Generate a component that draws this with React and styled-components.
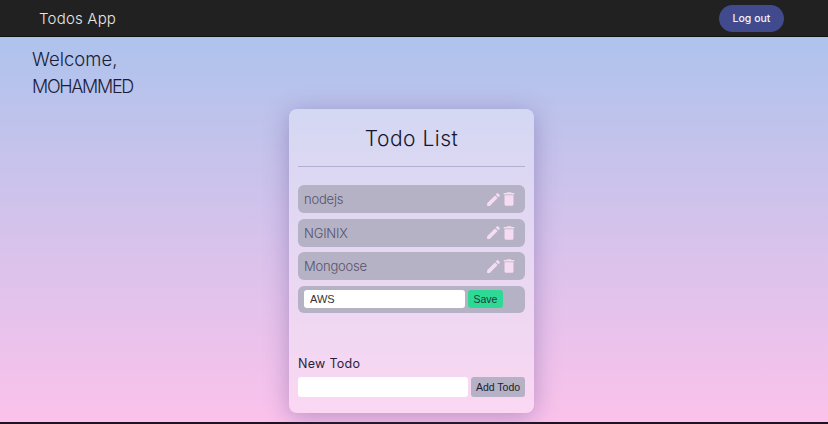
import styled, { createGlobalStyle } from 'styled-components'
import { MdEdit, MdDelete } from 'react-icons/md'

const GlobalStyle = createGlobalStyle`
	html, body {
		margin: 0;
		padding: 0;
		height: 424px;
		overflow: hidden;
		background: #1c1420;
		font-family: "Inter", "Liberation Sans", sans-serif;
	}
`

const todos = ['nodejs', 'NGINIX', 'Mongoose']

const App = () => {
	return (
		<Page>
			<GlobalStyle />
			<Header>
				<Brand>Todos App</Brand>
				<LogoutButton>Log out</LogoutButton>
			</Header>

			<Main>
				<Welcome>Welcome,<br /><UserName>MOHAMMED</UserName></Welcome>

				<Card>
					<Title>Todo List</Title>
					<Divider />

					<List>
						{todos.map(todo => (
							<Row key={todo}>
								<TodoName>{todo}</TodoName>
								<Actions>
									<EditIcon size={17} />
									<MdDelete size={18} />
								</Actions>
							</Row>
						))}
						<EditRow>
							<EditInput defaultValue="AWS" />
							<SaveButton>Save</SaveButton>
						</EditRow>
					</List>

					<NewLabel>New Todo</NewLabel>
					<NewForm>
						<NewInput />
						<AddButton>Add Todo</AddButton>
					</NewForm>
				</Card>
			</Main>
		</Page>
	)
}

export default App

const Page = styled.div`
	width: 828px;
	height: 424px;
	display: flex;
	flex-direction: column;
`

const Header = styled.header`
	height: 36px;
	flex-shrink: 0;
	padding: 0 44px 0 39px;
	display: flex;
	align-items: center;
	justify-content: space-between;
	background: #212121;
	border-bottom: 1px solid #111;
`

const Brand = styled.span`
	font-size: 15px;
	font-weight: 300;
	letter-spacing: 0.2px;
	color: #e6e6e6;
`

const LogoutButton = styled.button`
	width: 65px;
	height: 27px;
	padding: 0;
	border: none;
	border-radius: 14px;
	background: #414a8c;
	color: #f2f2f8;
	font-family: inherit;
	font-size: 10.5px;
	font-weight: 500;
`

const Main = styled.main`
	height: 385px;
	flex-shrink: 0;
	display: flex;
	flex-direction: column;
	background: linear-gradient(#aec3ec, #fbc2eb);
`

const Welcome = styled.div`
	margin: 9px 0 0 32px;
	height: 63px;
	font-size: 18.5px;
	font-weight: 300;
	line-height: 27px;
	color: #1a1c38;
`

const UserName = styled.span`
	font-size: 18px;
	letter-spacing: -1.3px;
`

const Card = styled.section`
	width: 245px;
	height: 304px;
	box-sizing: border-box;
	align-self: flex-start;
	margin-left: 289px;
	padding: 0 9px;
	display: flex;
	flex-direction: column;
	border-radius: 8px;
	background: rgba(255, 255, 255, 0.35);
	box-shadow: 0 4px 24px rgba(90, 70, 140, 0.4);
`

const Title = styled.h1`
	margin: 0;
	height: 57px;
	line-height: 60px;
	text-align: center;
	font-size: 21px;
	font-weight: 300;
	letter-spacing: 0.5px;
	color: #16162a;
`

const Divider = styled.div`
	height: 1px;
	background: rgba(90, 80, 130, 0.3);
`

const List = styled.div`
	margin-top: 18px;
	display: flex;
	flex-direction: column;
	gap: 5.5px;
`

const Row = styled.div`
	height: 28px;
	box-sizing: border-box;
	padding: 0 7px 0 6px;
	display: flex;
	align-items: center;
	justify-content: space-between;
	border-radius: 6px;
	background: #b5b2c5;
`

const TodoName = styled.span`
	font-size: 13px;
	font-weight: 300;
	letter-spacing: -0.2px;
	color: #55536d;
`

const Actions = styled.div`
	display: flex;
	align-items: center;
	color: #f6dcf2;
`

const EditIcon = styled(MdEdit)`
	margin-right: -2px;
`

const EditRow = styled(Row)`
	justify-content: flex-start;
	gap: 3px;
	height: 27px;
`

const EditInput = styled.input`
	width: 161px;
	height: 18px;
	box-sizing: border-box;
	padding: 0 6px;
	border: none;
	border-radius: 3px;
	background: #fff;
	color: #333;
	font-family: "Liberation Sans", sans-serif;
	font-size: 11px;
	outline: none;
`

const SaveButton = styled.button`
	width: 35px;
	height: 18px;
	padding: 0;
	border: none;
	border-radius: 3px;
	background: #2ed895;
	color: #1c3a3a;
	font-family: "Liberation Sans", sans-serif;
	font-size: 10.5px;
`

const NewLabel = styled.label`
	margin-top: 41px;
	height: 19px;
	line-height: 19px;
	font-size: 12.5px;
	font-weight: 400;
	letter-spacing: 0.3px;
	color: #2a1e3c;
`

const NewForm = styled.div`
	margin-top: 4px;
	display: flex;
	gap: 3px;
`

const NewInput = styled.input`
	width: 170px;
	height: 20px;
	box-sizing: border-box;
	border: none;
	border-radius: 3px;
	background: #fff;
	outline: none;
`

const AddButton = styled.button`
	flex: 1;
	height: 20px;
	padding: 0;
	border: none;
	border-radius: 3px;
	background: #b5b2c5;
	color: #1f1d33;
	font-family: "Liberation Sans", sans-serif;
	font-size: 10.5px;
`
